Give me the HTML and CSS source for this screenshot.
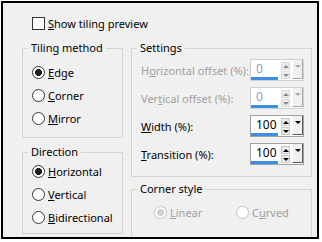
FILE: index.html
```html
<!DOCTYPE html>
<html lang="en">
<head>
<meta charset="UTF-8">
<title>Tiling</title>
<link rel="stylesheet" href="styles.css">
</head>
<body>
<div class="frame">
    <div class="check-row">
        <span class="checkbox"></span>
        <span><u>S</u>how tiling preview</span>
    </div>

    <div class="columns">
        <div class="col">
            <!-- tiling method -->
            <div class="group tiling">
                <span class="group-title">Tiling method</span>
                <div class="radio-row"><span class="radio checked"></span><span><u>E</u>dge</span></div>
                <div class="radio-row"><span class="radio"></span><span><u>C</u>orner</span></div>
                <div class="radio-row"><span class="radio"></span><span><u>M</u>irror</span></div>
            </div>
            <!-- direction -->
            <div class="group direction">
                <span class="group-title">Direction</span>
                <div class="radio-row"><span class="radio checked"></span><span><u>H</u>orizontal</span></div>
                <div class="radio-row"><span class="radio"></span><span><u>V</u>ertical</span></div>
                <div class="radio-row"><span class="radio"></span><span><u>B</u>idirectional</span></div>
            </div>
        </div>

        <div class="col right">
            <!-- settings -->
            <div class="group settings">
                <span class="group-title">Settings</span>
                <div class="field-row disabled">
                    <span>H<u>o</u>rizontal offset (%):</span>
                    <div class="spin">
                        <span class="spin-value">0</span>
                        <span class="spin-arrows"><i class="up"></i><i class="down"></i></span>
                        <span class="spin-drop"><i></i></span>
                    </div>
                </div>
                <div class="field-row disabled">
                    <span>Ver<u>t</u>ical offset (%):</span>
                    <div class="spin">
                        <span class="spin-value">0</span>
                        <span class="spin-arrows"><i class="up"></i><i class="down"></i></span>
                        <span class="spin-drop"><i></i></span>
                    </div>
                </div>
                <div class="field-row">
                    <span><u>W</u>idth (%):</span>
                    <div class="spin">
                        <span class="spin-value">100</span>
                        <span class="spin-arrows"><i class="up"></i><i class="down"></i></span>
                        <span class="spin-drop"><i></i></span>
                    </div>
                </div>
                <div class="field-row">
                    <span><u>T</u>ransition (%):</span>
                    <div class="spin">
                        <span class="spin-value">100</span>
                        <span class="spin-arrows"><i class="up"></i><i class="down"></i></span>
                        <span class="spin-drop"><i></i></span>
                    </div>
                </div>
            </div>
            <!-- corner style -->
            <div class="group corner">
                <span class="group-title">Corner style</span>
                <div class="corner-options disabled">
                    <div class="radio-row linear"><span class="radio checked"></span><span><u>L</u>inear</span></div>
                    <div class="radio-row"><span class="radio"></span><span>C<u>u</u>rved</span></div>
                </div>
            </div>
        </div>
    </div>
</div>
</body>
</html>
```

FILE: styles.css
```css
* {
    margin: 0;
    padding: 0;
    box-sizing: border-box;
}

body {
    background: #fff;
    font-family: "Noto Sans", "Open Sans", sans-serif;
    font-size: 11px;
    color: #000;
}

u {
    text-decoration: underline;
    text-underline-offset: 1px;
}

.frame {
    margin: 1px 0 0 1px;
    width: 318px;
    height: 238px;
    border: 2px solid #000;
    background: #f0f0f0;
    padding: 12px 0 0 19px;
    overflow: hidden;
}

.check-row {
    display: flex;
    align-items: center;
    gap: 3px;
    height: 16px;
    margin-left: 10px;
}

.checkbox {
    width: 13px;
    height: 13px;
    border: 1px solid #333;
    background: #fff;
}

.columns {
    display: grid;
    grid-template-columns: 101px 181px;
    column-gap: 8px;
    margin-top: 17px;
}

.col {
    display: flex;
    flex-direction: column;
    gap: 14px;
}

.col.right {
    gap: 12px;
}

/* group boxes */
.group {
    position: relative;
    border: 1px solid #d5d5d5;
}

.group-title {
    position: absolute;
    top: -8px;
    left: 5px;
    padding: 0 3px;
    line-height: 14px;
    background: #f0f0f0;
}

.tiling {
    height: 90px;
    padding: 12px 0 0 9px;
}

.direction {
    height: 82px;
    padding: 7px 0 0 9px;
}

.settings {
    height: 129px;
    padding: 10px 7px 0 9px;
    display: flex;
    flex-direction: column;
    gap: 6px;
}

.corner {
    height: 60px;
    padding: 11px 0 0 22px;
}

.radio-row {
    display: flex;
    align-items: center;
    gap: 3px;
    height: 22px;
    margin-bottom: 1px;
}

.radio {
    width: 13px;
    height: 13px;
    border: 1px solid #333;
    border-radius: 50%;
    background: #fff;
}

.radio.checked {
    background: radial-gradient(circle, #1e1e1e 3.2px, #fff 3.8px);
}

/* settings rows */
.field-row {
    display: flex;
    align-items: center;
    justify-content: space-between;
    height: 22px;
}

.spin {
    display: flex;
    width: 54px;
    height: 22px;
    border: 1px solid #a0a0a0;
    background: #fff;
}

.spin-value {
    width: 28px;
    padding-left: 5px;
    border-bottom: 3px solid #3c8fe4;
    font-size: 12px;
    line-height: 17px;
}

.spin-arrows {
    display: flex;
    flex-direction: column;
    justify-content: center;
    gap: 1px;
    width: 9px;
    margin: 1px 2px 0 3px;
}

.spin-arrows i {
    display: flex;
    justify-content: center;
    align-items: center;
    height: 8px;
    background: #ededed;
    border: 1px solid #c8c8c8;
}

.spin-arrows i::after {
    content: "";
    border-left: 3px solid transparent;
    border-right: 3px solid transparent;
}

.spin-arrows .up::after {
    border-bottom: 3px solid #000;
}

.spin-arrows .down::after {
    border-top: 3px solid #000;
}

.spin-drop {
    display: flex;
    justify-content: center;
    width: 11px;
    margin: 0 0 1px 0;
    background: #f0f0f0;
    border-left: 1px solid #fff;
    border-right: 1px solid #5a5a5a;
    border-bottom: 1px solid #5a5a5a;
}

.spin-drop i {
    margin-top: 5px;
    width: 0;
    height: 0;
    border-left: 3px solid transparent;
    border-right: 3px solid transparent;
    border-top: 3px solid #000;
}

/* disabled state */
.disabled {
    color: #a0a0a0;
}

.disabled .spin {
    border-color: #d0d0d0;
}

.disabled .spin-value {
    color: #7f9fc9;
}

.disabled .spin-arrows i {
    border-color: #dadada;
}

.disabled .spin-arrows .up::after {
    border-bottom-color: #8a8a8a;
}

.disabled .spin-arrows .down::after {
    border-top-color: #8a8a8a;
}

.disabled .spin-drop {
    border-right-color: #a8a8a8;
    border-bottom-color: #a8a8a8;
}

.disabled .spin-drop i {
    border-top-color: #a8a8a8;
}

.corner-options {
    display: flex;
}

.corner-options .linear {
    width: 82px;
}

.disabled .radio {
    border-color: #c4c4c4;
}

.disabled .radio.checked {
    background: radial-gradient(circle, #cfcfcf 3.2px, #fff 3.8px);
}
```
